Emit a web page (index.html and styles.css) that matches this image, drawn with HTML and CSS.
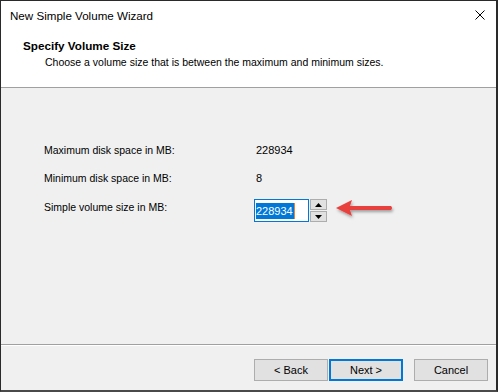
FILE: index.html
```html
<!DOCTYPE html>
<html lang="en">
<head>
<meta charset="UTF-8">
<title>New Simple Volume Wizard</title>
<link rel="stylesheet" href="styles.css">
</head>
<body>

<div class="window">
  <div class="titlebar">
    <span class="title">New Simple Volume Wizard</span>
    <svg class="close" width="10" height="10" viewBox="0 0 10 10">
      <path d="M0.5 0.5 L9.5 9.5 M9.5 0.5 L0.5 9.5" stroke="#000" stroke-width="1"/>
    </svg>
  </div>

  <div class="header">
    <div class="heading">Specify Volume Size</div>
    <div class="subheading">Choose a volume size that is between the maximum and minimum sizes.</div>
  </div>

  <div class="content">
    <div class="row">
      <div class="label">Maximum disk space in MB:</div>
      <div class="value">228934</div>
    </div>
    <div class="row">
      <div class="label">Minimum disk space in MB:</div>
      <div class="value">8</div>
    </div>
    <div class="row">
      <div class="label label-input">Simple volume size in MB:</div>
      <div class="field">
        <div class="input"><span class="selected">228934</span><span class="caret"></span></div>
        <div class="spinner">
          <div class="spin-btn"><svg width="7" height="4" viewBox="0 0 7 4"><path d="M3.5 0 L7 4 L0 4 Z" fill="#000"/></svg></div>
          <div class="spin-btn"><svg width="7" height="4" viewBox="0 0 7 4"><path d="M0 0 L7 0 L3.5 4 Z" fill="#000"/></svg></div>
        </div>
        <!-- annotation arrow -->
        <svg class="arrow" width="62" height="26" viewBox="0 0 62 26">
          <defs>
            <filter id="shadow" x="-20%" y="-40%" width="140%" height="200%">
              <feDropShadow dx="1" dy="2" stdDeviation="1.5" flood-color="#000" flood-opacity="0.35"/>
            </filter>
          </defs>
          <g filter="url(#shadow)">
            <path d="M1 11 L17 3 L15 9 L56 9 Q58 11 56 13 L15 13 L17 19 Z" fill="#e8403e"/>
          </g>
        </svg>
      </div>
    </div>
  </div>

  <div class="footer">
    <button class="btn">&lt; Back</button>
    <button class="btn btn-default">Next &gt;</button>
    <button class="btn btn-cancel">Cancel</button>
  </div>
</div>

</body>
</html>
```

FILE: styles.css
```css
body, html {
  margin: 0;
  padding: 0;
  overflow: hidden;
}

body {
  font-family: "Liberation Sans", Arial, sans-serif;
  font-size: 10.5px;
  color: #000;
}

.window {
  width: 498px;
  height: 392px;
  box-sizing: border-box;
  border: 1px solid #2a2a2a;
  border-right-width: 2px;
  border-bottom: 2px solid #4a4a4a;
  background: #f0f0f0;
  display: flex;
  flex-direction: column;
}

.titlebar {
  height: 28px;
  background: #fff;
  display: flex;
  align-items: center;
  justify-content: space-between;
  padding: 0 11px 0 9px;
}

.title {
  font-size: 11.6px;
}

.close {
  display: block;
}

.header {
  height: 59px;
  box-sizing: border-box;
  background: #fff;
  border-bottom: 1px solid #a0a0a0;
  padding-top: 10px;
}

.heading {
  font-weight: bold;
  font-size: 11.7px;
  line-height: 14px;
  margin-left: 22px;
}

.subheading {
  line-height: 14px;
  margin-top: 2px;
  margin-left: 44px;
}

.content {
  flex: 1;
  padding: 55px 0 0 43px;
}

.row {
  display: flex;
  height: 28px;
  line-height: 14px;
}

.label {
  width: 212px;
}

.label-input {
  padding-top: 1px;
}

.value {
  font-size: 11px;
}

.field {
  display: flex;
  margin-left: -2px;
}

.input {
  width: 52px;
  height: 21px;
  border: 1px solid #0078d7;
  background: #fff;
  display: flex;
  align-items: center;
  padding-left: 1px;
  font-size: 11px;
}

.selected {
  background: #0078d7;
  color: #fff;
  line-height: 16px;
  padding-right: 1px;
}

.caret {
  width: 1px;
  height: 16px;
  background: #e8843a;
}

.spinner {
  display: flex;
  flex-direction: column;
  margin-left: 1px;
}

.spin-btn {
  width: 15px;
  height: 9px;
  border: 1px solid #adadad;
  background: #e1e1e1;
  display: flex;
  align-items: center;
  justify-content: center;
}

.spin-btn + .spin-btn {
  margin-top: 1px;
}

.arrow {
  margin-left: 8px;
  margin-top: -2px;
}

.footer {
  height: 46px;
  box-sizing: border-box;
  border-top: 1px solid #a0a0a0;
  box-shadow: inset 0 1px 0 #fff;
  display: flex;
  justify-content: flex-end;
  align-items: flex-start;
  padding: 14px 8px 0 0;
}

.btn {
  width: 74px;
  height: 22px;
  box-sizing: border-box;
  border: 1px solid #adadad;
  background: #e1e1e1;
  font-family: "Liberation Sans", Arial, sans-serif;
  font-size: 11px;
  color: #000;
  padding: 0;
  margin-left: 1px;
}

.btn-default {
  border: 2px solid #0078d7;
}

.btn-cancel {
  margin-left: 11px;
}
```
